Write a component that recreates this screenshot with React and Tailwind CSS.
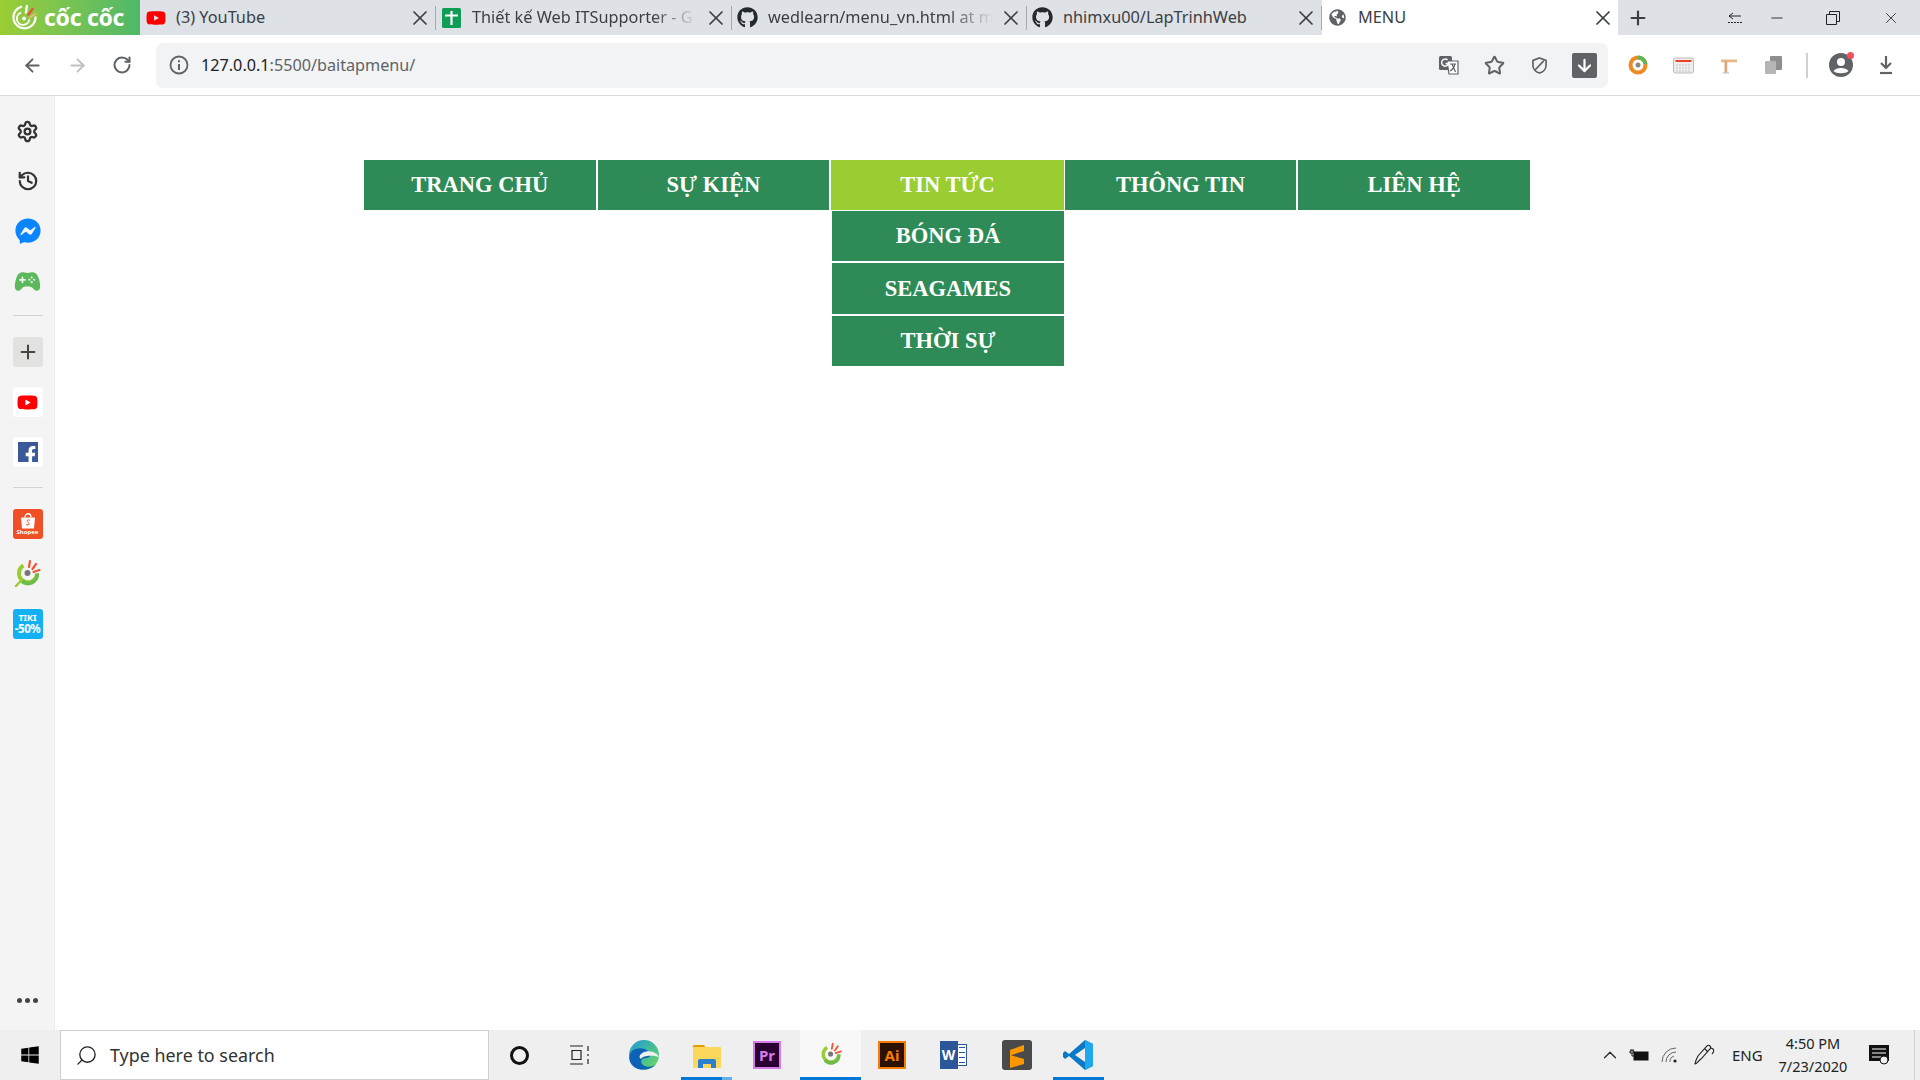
import { ArrowLeft, ArrowRight, RotateCw, Plus, X, Minus, Star, Settings, History, ChevronUp, Search, ArrowDown } from "lucide-react";
import { FaGithub, FaFacebookF, FaFacebookMessenger, FaWindows, FaGlobeAmericas, FaYoutube } from "react-icons/fa";
import { IoGameController } from "react-icons/io5";

const uiFont = "font-['Noto_Sans','Open_Sans',sans-serif]";

const CocCocIcon = ({ className, ring = "#6dbb4b", ring2 = "#9acd32", rays = "#f0563a", dot = "#777", tail = false }) => (
  <svg viewBox="0 0 28 28" className={className}>
    <path d="M9.5 6.5 A9 9 0 1 0 23 14.5" fill="none" stroke={ring2} strokeWidth="4" />
    <path d="M7 21 A9 9 0 0 0 23 14.5" fill="none" stroke={ring} strokeWidth="4" />
    {tail && <path d="M7.5 21 L2 27" stroke={ring2} strokeWidth="2.4" strokeLinecap="round" />}
    <circle cx="13.5" cy="14" r="3" fill={dot} />
    <path d="M15 8 L16 2 M18.5 10 L22 5 M19.5 13 L25.5 11" stroke={rays} strokeWidth="2.2" strokeLinecap="round" />
  </svg>
);

const LogoMark = () => (
  <svg viewBox="0 0 28 28" className="w-[28px] h-[27px]">
    <path d="M12 2.5 A11.5 11.5 0 1 0 26 13" fill="none" stroke="#fff" strokeWidth="2.2" />
    <path d="M11 9 A6.5 6.5 0 1 0 19.5 16" fill="none" stroke="#fff" strokeWidth="2" />
    <circle cx="14" cy="15" r="2" fill="#fff" />
    <path d="M16 9 L17 2" stroke="#fff" strokeWidth="2.4" strokeLinecap="round" />
    <path d="M18.5 11 L23 5" stroke="#e8503a" strokeWidth="2.4" strokeLinecap="round" />
    <path d="M20 14 L26 10" stroke="#f4b27a" strokeWidth="1.8" strokeLinecap="round" />
  </svg>
);

const SheetsIcon = () => (
  <svg viewBox="0 0 19 20" className="w-[19px] h-[20px] shrink-0">
    <rect width="19" height="20" rx="1.5" fill="#0f9d58" />
    <path d="M3 7.5 H16 M9.5 3 V17" stroke="#fff" strokeWidth="2.2" />
  </svg>
);

const Tab = ({ icon, title, fade, active, width = "w-[296px]" }) => (
  <div className={`${width} flex items-center pl-[5px] pr-[3px] shrink-0 ${active ? "h-full bg-white" : "h-[24px] border-r border-[#80868b]/60"}`}>
    <div className="w-[21px] flex justify-center shrink-0">{icon}</div>
    <div className={`ml-[10px] flex-1 overflow-hidden whitespace-nowrap text-[16.3px] text-[#3c4043] ${fade ? "[mask-image:linear-gradient(to_right,black_80%,transparent)]" : ""}`}>
      {title}
    </div>
    <X className="w-[24px] h-[24px] ml-[6px] text-[#3c4043] shrink-0" strokeWidth={1.7} />
  </div>
);

const TabStrip = () => (
  <div className="h-[35px] bg-[#dee1e6] flex items-center shrink-0">
    <div className="w-[140px] h-full flex items-center pl-[10px] bg-gradient-to-r from-[#9acd32] to-[#4db868]">
      <LogoMark />
      <span className="ml-[6px] text-white font-bold text-[23px] leading-none tracking-[-0.3px]">cốc cốc</span>
    </div>
    <Tab icon={<FaYoutube className="w-[20px] h-[20px] text-[#f00]" />} title="(3) YouTube" />
    <Tab icon={<SheetsIcon />} title="Thiết kế Web ITSupporter - G" fade />
    <Tab width="w-[295px]" icon={<FaGithub className="w-[21px] h-[21px] text-[#24292e]" />} title="wedlearn/menu_vn.html at m" fade />
    <Tab width="w-[295px]" icon={<FaGithub className="w-[21px] h-[21px] text-[#24292e]" />} title="nhimxu00/LapTrinhWeb" />
    <Tab active icon={<FaGlobeAmericas className="w-[17px] h-[17px] text-[#5f6368]" />} title="MENU" />
    <Plus className="w-[22px] h-[22px] ml-[9px] text-[#3c4043]" strokeWidth={2.4} />
    <div className="ml-auto flex items-center h-full text-[#222]">
      <svg viewBox="0 0 14 12" className="w-[14px] h-[12px] mr-[26px]">
        <path d="M5 1 L1 4 L5 7 M1 4 H13" fill="none" stroke="#222" strokeWidth="1" />
        <path d="M0 10.5 H14" fill="none" stroke="#222" strokeWidth="1" strokeDasharray="2 1" />
      </svg>
      <Minus className="w-[18px] h-[18px] mr-[40px]" strokeWidth={1.2} />
      <svg viewBox="0 0 14 14" className="w-[14px] h-[14px] mr-[42px]">
        <path d="M0.5 3.5 H10.5 V13.5 H0.5 Z M3.5 3.5 V0.5 H13.5 V10.5 H10.5" fill="none" stroke="#222" strokeWidth="1" />
      </svg>
      <X className="w-[18px] h-[18px] mr-[20px]" strokeWidth={1.1} />
    </div>
  </div>
);

const Toolbar = () => (
  <div className="h-[61px] bg-white border-b border-[#dcdcdc] flex items-center shrink-0">
    <ArrowLeft className="w-[21px] h-[21px] ml-[22px] text-[#5f6368]" strokeWidth={2.2} />
    <ArrowRight className="w-[21px] h-[21px] ml-[24px] text-[#bdc1c6]" strokeWidth={2.2} />
    <RotateCw className="w-[20px] h-[20px] ml-[24px] text-[#5f6368]" strokeWidth={2.4} />
    <div className="ml-[24px] w-[1452px] h-[45px] rounded-[7px] bg-[#f1f3f4] flex items-center pr-[11px]">
      <svg viewBox="0 0 20 20" className="w-[20px] h-[20px] ml-[13px]">
        <circle cx="10" cy="10" r="8.5" fill="none" stroke="#5f6368" strokeWidth="1.8" />
        <path d="M10 9 V15 M10 5.2 V7.2" stroke="#5f6368" strokeWidth="2" />
      </svg>
      <span className="ml-[12px] text-[16.2px] text-[#202124] whitespace-nowrap">
        127.0.0.1<span className="text-[#5f6368]">:5500/baitapmenu/</span>
      </span>
      <div className="ml-auto flex items-center">
        <svg viewBox="0 0 20 20" className="w-[20px] h-[20px]">
          <rect x="0" y="1" width="13" height="14" rx="1.5" fill="#5f6368" />
          <path d="M8 6 H19 V19 H10 Z" fill="#fff" stroke="#5f6368" strokeWidth="1.2" />
          <path d="M11 9 H17 M13 9 L16.5 17 M16 9 C15 13 13 15 11 16" fill="none" stroke="#5f6368" strokeWidth="1.2" />
          <path d="M8.5 5 A3.5 3.5 0 1 0 9.5 8.5 H6.5" fill="none" stroke="#fff" strokeWidth="1.4" />
        </svg>
        <Star className="w-[21px] h-[21px] ml-[25px] text-[#5f6368]" strokeWidth={2.3} />
        <svg viewBox="0 0 16 18" className="w-[15px] h-[17px] ml-[27px]">
          <path d="M8 1 L15 3.5 V9 C15 13 11.5 16 8 17 C4.5 16 1 13 1 9 V3.5 Z M3.5 13.5 L12.5 4" fill="none" stroke="#5f6368" strokeWidth="1.8" />
        </svg>
        <div className="w-[25px] h-[25px] ml-[25px] rounded-[2px] bg-[#5f6368] flex items-center justify-center">
          <ArrowDown className="w-[19px] h-[19px] text-white" strokeWidth={2.8} />
        </div>
      </div>
    </div>
    <svg viewBox="0 0 20 20" className="w-[20px] h-[20px] ml-[20px]">
      <circle cx="10" cy="10" r="7.5" fill="none" stroke="#f08a24" strokeWidth="4" />
      <path d="M10 2.5 A7.5 7.5 0 0 1 17.5 9" fill="none" stroke="#5cb85c" strokeWidth="4" />
      <circle cx="10" cy="10" r="2.5" fill="#888" />
    </svg>
    <svg viewBox="0 0 21 20" className="w-[21px] h-[20px] ml-[25px]">
      <rect x="0.5" y="3" width="20" height="15" rx="2" fill="#eee" stroke="#bbb" />
      <rect x="2.5" y="5" width="16" height="2" fill="#e8431f" />
      <path d="M3 10 H18 M3 13 H18 M3 16 H18" stroke="#c4c4c4" strokeWidth="1.2" strokeDasharray="2 1" />
    </svg>
    <svg viewBox="0 0 18 20" className="w-[18px] h-[18px] ml-[26px]">
      <rect x="0" y="4" width="18" height="3" rx="1" fill="#e8b98c" />
      <rect x="4" y="5" width="3" height="14" fill="#dca877" />
      <rect x="2" y="18" width="7" height="1.5" fill="#c9c9c9" />
    </svg>
    <svg viewBox="0 0 18 18" className="w-[18px] h-[18px] ml-[27px]">
      <rect x="5" y="0" width="12" height="14" rx="1" fill="#8f8f8f" />
      <rect x="0" y="5" width="11" height="13" rx="1" fill="#b5b5b5" />
    </svg>
    <div className="w-[2px] h-[25px] ml-[23px] bg-[#d0d0d0]" />
    <div className="relative ml-[21px]">
      <svg viewBox="0 0 24 24" className="w-[24px] h-[24px]">
        <circle cx="12" cy="12" r="12" fill="#5f6368" />
        <circle cx="12" cy="9" r="4" fill="#fff" />
        <path d="M4.5 18 C7 14 17 14 19.5 18 C17 21 7 21 4.5 18 Z" fill="#fff" />
      </svg>
      <span className="absolute -top-[1px] -right-[1px] w-[7px] h-[7px] rounded-full bg-[#f4505c]" />
    </div>
    <svg viewBox="0 0 14 20" className="w-[14px] h-[20px] ml-[26px]">
      <path d="M7 1 V13 M2 8 L7 13 L12 8" fill="none" stroke="#5f6368" strokeWidth="2.2" />
      <path d="M1 18 H13" stroke="#5f6368" strokeWidth="2.2" />
    </svg>
  </div>
);

const Tile = ({ className = "bg-white", children }) => (
  <div className={`w-[30px] h-[30px] rounded-[3px] flex items-center justify-center overflow-hidden ${className}`}>{children}</div>
);

const Slot = ({ children, className = "" }) => (
  <div className={`h-[50px] flex items-center justify-center shrink-0 ${className}`}>{children}</div>
);

const Divider = ({ className = "" }) => <div className={`w-[30px] h-[1px] bg-[#d4d4d4] shrink-0 ${className}`} />;

const Sidebar = () => (
  <div className="w-[55px] bg-[#f4f4f4] border-r border-[#ececec] flex flex-col items-center pt-[10px] pl-[1px] shrink-0">
    <Slot><Settings className="w-[23px] h-[23px] text-[#333]" strokeWidth={2.4} /></Slot>
    <Slot><History className="w-[22px] h-[22px] text-[#333]" strokeWidth={2.4} /></Slot>
    <Slot><FaFacebookMessenger className="w-[26px] h-[26px] text-[#0a84ff]" /></Slot>
    <Slot><IoGameController className="w-[27px] h-[27px] text-[#5cb85c]" /></Slot>
    <Divider className="mt-[9px]" />
    <Tile className="bg-[#e2e2e0] mt-[21px]"><Plus className="w-[22px] h-[22px] text-[#444]" strokeWidth={2.2} /></Tile>
    <Tile className="bg-white mt-[20px]"><FaYoutube className="w-[21px] h-[21px] text-[#f00]" /></Tile>
    <Tile className="bg-white mt-[20px]">
      <div className="w-[20px] h-[20px] bg-[#3b5998] flex items-end justify-end overflow-hidden">
        <FaFacebookF className="w-[17px] h-[18px] text-white -mb-[2px] -mr-[1px]" />
      </div>
    </Tile>
    <Divider className="mt-[20px]" />
    <Tile className="bg-[#f05025] mt-[21px] flex-col !justify-start">
      <svg viewBox="0 0 16 16" className="w-[16px] h-[17px] mt-[3px]">
        <path d="M1 5 H15 L14 16 H2 Z" fill="#fff" />
        <path d="M5 5 C5 0 11 0 11 5" fill="none" stroke="#fff" strokeWidth="1.3" />
        <path d="M10 8 C8 6.5 6 8 8 10 C10 11 9 13.5 6 12" fill="none" stroke="#f05025" strokeWidth="1" />
      </svg>
      <span className="text-[6px] leading-[7px] text-white font-bold">Shopee</span>
    </Tile>
    <Slot className="!h-[30px] mt-[19px]"><CocCocIcon className="w-[28px] h-[28px]" tail /></Slot>
    <Tile className="bg-[#13b1f3] mt-[21px] flex-col">
      <span className="text-[9px] leading-[10px] text-white font-bold">TIKI</span>
      <span className="text-[11.5px] leading-[12px] text-white font-bold tracking-[-0.4px]">-50%</span>
    </Tile>
    <div className="mt-auto mb-[27px] flex gap-[3px]">
      <span className="w-[5px] h-[5px] rounded-full bg-[#444]" />
      <span className="w-[5px] h-[5px] rounded-full bg-[#444]" />
      <span className="w-[5px] h-[5px] rounded-full bg-[#444]" />
    </div>
  </div>
);

const menuItems = [
  { label: "TRANG CHỦ" },
  { label: "SỰ KIỆN" },
  { label: "TIN TỨC", active: true, children: ["BÓNG ĐÁ", "SEAGAMES", "THỜI SỰ"] },
  { label: "THÔNG TIN" },
  { label: "LIÊN HỆ" },
];

const Menu = () => (
  <div className="flex items-start font-['Liberation_Serif',serif] font-bold text-[22.5px] text-white">
    {menuItems.map((item) => (
      <div key={item.label} className="w-[233.6px] flex flex-col shrink-0">
        <div className={`h-[50px] flex items-center justify-center ${item.active ? "mr-[1px] bg-[#9acd32]" : "mr-[2px] bg-[#2e8b57]"}`}>
          {item.label}
        </div>
        {item.children && (
          <div className="mt-[1px] ml-[1px] mr-[1px] flex flex-col gap-[2px]">
            {item.children.map((child) => (
              <div key={child} className="h-[50.3px] flex items-center justify-center bg-[#2e8b57]">
                {child}
              </div>
            ))}
          </div>
        )}
      </div>
    ))}
  </div>
);

const TaskSlot = ({ width, active, children }) => (
  <div className={`${width} h-full flex items-center justify-center shrink-0 relative ${active ? "border-b-[3px] border-[#0078d7] bg-[#f8f8f8]" : ""}`}>
    {children}
  </div>
);

const Taskbar = () => (
  <div className={`h-[50px] bg-[#efefef] flex items-stretch shrink-0 ${uiFont}`}>
    <div className="w-[60px] flex items-center justify-center shrink-0">
      <FaWindows className="w-[20px] h-[20px] text-black" />
    </div>
    <div className="w-[429px] bg-white border border-[#cfcfcf] flex items-center shrink-0">
      <Search className="w-[23px] h-[23px] ml-[14px] text-[#222] -scale-x-100" strokeWidth={1.4} />
      <span className="ml-[12px] text-[17.9px] text-[#333]">Type here to search</span>
    </div>
    <TaskSlot width="w-[61px]">
      <div className="w-[19px] h-[19px] rounded-full border-[3px] border-[#111]" />
    </TaskSlot>
    <TaskSlot width="w-[60px]">
      <svg viewBox="0 0 21 20" className="w-[21px] h-[20px] mr-[2px]">
        <path d="M1 1 H14 M1 19 H14 M3 5.5 H12 V14.5 H3 Z M19 1 V6 M19 9 V11 M19 14 V19" fill="none" stroke="#222" strokeWidth="1.2" />
      </svg>
    </TaskSlot>
    <TaskSlot width="w-[71px]">
      <svg viewBox="0 0 30 30" className="w-[30px] h-[30px] mr-[3px]">
        <defs>
          <linearGradient id="edgeTop" x1="0" y1="0" x2="1" y2="1">
            <stop offset="0" stopColor="#1c9ad6" />
            <stop offset="1" stopColor="#6fdc5c" />
          </linearGradient>
        </defs>
        <circle cx="15" cy="15" r="15" fill="url(#edgeTop)" />
        <path d="M0.5 17 C1 8 14 5 21 13 C23 16 20 18 17 18 C13 18 10 21 14 25 C18 28 24 27 27 24 C23 30 10 32 4 26 C1 23 0 20 0.5 17 Z" fill="#0b62b6" />
        <path d="M12 19 C14 15 24 15 30 17 C28 12 20 10 15 12 C11 14 9 17 12 19 Z" fill="#efefef" />
      </svg>
    </TaskSlot>
    <TaskSlot width="w-[51px]">
      <svg viewBox="0 0 28 24" className="w-[28px] h-[24px] mb-[-1px]">
        <path d="M0 2 A1 1 0 0 1 1 1 H11 L13 4 H0 Z" fill="#e0a100" />
        <rect y="3" width="28" height="21" rx="1" fill="#fbd75b" />
        <path d="M5 24 V17 A2 2 0 0 1 7 15 H21 A2 2 0 0 1 23 17 V24 H18 V20 H10 V24 Z" fill="#2a7fd0" />
      </svg>
      <div className="absolute bottom-0 left-0 w-[41px] h-[3px] bg-[#0078d7]" />
      <div className="absolute bottom-0 right-0 w-[10px] h-[3px] bg-[#66aee7]" />
    </TaskSlot>
    <TaskSlot width="w-[68px]">
      <div className="w-[28px] h-[28px] ml-[2px] bg-[#2a0033] border-[2px] border-[#d77be8] flex items-center justify-center text-[#d77be8] font-bold text-[15px] leading-none">Pr</div>
    </TaskSlot>
    <TaskSlot width="w-[61px]" active>
      <CocCocIcon className="w-[24px] h-[24px]" />
    </TaskSlot>
    <TaskSlot width="w-[62px]">
      <div className="w-[28px] h-[28px] bg-[#2b1100] border-[2px] border-[#f57c00] flex items-center justify-center text-[#f57c00] font-bold text-[15px] leading-none">Ai</div>
    </TaskSlot>
    <TaskSlot width="w-[62px]">
      <div className="flex items-center mr-[2px]">
        <div className="w-[18px] h-[28px] bg-[#2b579a] flex items-center justify-center text-white font-bold text-[14px] leading-none z-10">W</div>
        <div className="w-[10px] h-[22px] bg-white border border-[#2b579a] flex flex-col justify-around px-[1px] -ml-[1px]">
          <span className="h-[1px] bg-[#2b579a]" />
          <span className="h-[1px] bg-[#2b579a]" />
          <span className="h-[1px] bg-[#2b579a]" />
          <span className="h-[1px] bg-[#2b579a]" />
        </div>
      </div>
    </TaskSlot>
    <TaskSlot width="w-[68px]">
      <svg viewBox="0 0 30 30" className="w-[30px] h-[30px] mr-[5px]">
        <rect width="30" height="30" rx="3" fill="#4a4a4a" />
        <path d="M22 5 V11 L8 15.5 V10 Z M8 15 L22 19 V24 L8 28 V22 Z M8 14 L22 18" fill="#ff9800" />
      </svg>
    </TaskSlot>
    <TaskSlot width="w-[51px]">
      <svg viewBox="0 0 30 30" className="w-[30px] h-[30px] mr-[2px]">
        <path d="M22 0 L30 4 V26 L22 30 L6 16 L2 19 L0 17 V13 L2 11 L6 14 Z" fill="#0b7ac4" />
        <path d="M22 0 L30 4 V26 L22 30 Z" fill="#1fa8f0" />
        <path d="M22 8 V22 L12 15 Z" fill="#efefef" />
      </svg>
      <div className="absolute bottom-0 left-0 right-0 h-[3px] bg-[#0078d7]" />
    </TaskSlot>
    <div className="ml-auto flex items-center text-[#222]">
      <ChevronUp className="w-[22px] h-[22px]" strokeWidth={1.3} />
      <svg viewBox="0 0 20 14" className="w-[20px] h-[14px] ml-[8px]">
        <rect x="5" y="4" width="14" height="8" fill="#111" stroke="#111" />
        <path d="M2 1 V3 M4 1 V3 M1 3 H5 V5 H1 Z M3 5 V8 H5" stroke="#111" fill="none" />
      </svg>
      <svg viewBox="0 0 18 16" className="w-[18px] h-[16px] ml-[12px]">
        <path d="M1 15 A14 14 0 0 1 15 1 M5 15 A10 10 0 0 1 15 5 M9 15 A6 6 0 0 1 13 9" fill="none" stroke="#666" strokeWidth="1" />
        <circle cx="14" cy="14" r="1.6" fill="#222" />
      </svg>
      <svg viewBox="0 0 22 22" className="w-[22px] h-[22px] ml-[15px]">
        <path d="M1 20 C3 20 5 16 7 15 L16 5 C18 3 15 0 13 2 L4 12 C3 14 1 18 1 20 Z M11 5 L14 8 M16 4 C20 4 21 7 18 10" fill="none" stroke="#222" strokeWidth="1.1" />
      </svg>
      <span className="ml-[16px] text-[15px] w-[30px]">ENG</span>
      <div className="w-[100px] ml-[1px] flex flex-col items-center text-[14.5px] leading-[23px]">
        <span>4:50 PM</span>
        <span>7/23/2020</span>
      </div>
      <svg viewBox="0 0 20 20" className="w-[20px] h-[20px] ml-[6px]">
        <path d="M0 0 H20 V16 H0 Z" fill="#111" />
        <path d="M3 4 H17 M3 8 H17 M3 12 H12" stroke="#fff" strokeWidth="1" />
        <circle cx="15" cy="15" r="4" fill="#efefef" stroke="#111" />
      </svg>
      <div className="w-[1px] h-full ml-[25px] mr-[5px] bg-[#d0d0d0]" />
    </div>
  </div>
);

const App = () => {
  return (
    <div className={`w-[1920px] h-screen flex flex-col overflow-hidden bg-white ${uiFont}`}>
      <TabStrip />
      <Toolbar />
      <div className="flex flex-1 min-h-0">
        <Sidebar />
        <main className="flex-1 pl-[309px] pt-[64px] bg-white">
          <Menu />
        </main>
      </div>
      <Taskbar />
    </div>
  );
};

export default App;
